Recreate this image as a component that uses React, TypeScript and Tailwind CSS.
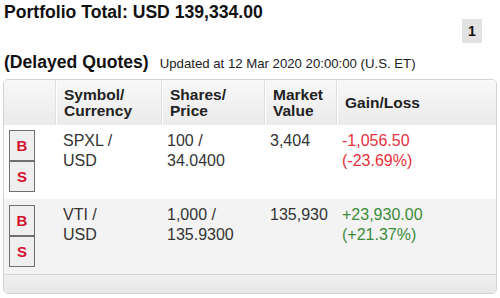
const font = { fontFamily: '"Liberation Sans", Arial, sans-serif' };

type Holding = {
  symbol: string;
  shares: string;
  price: string;
  value: string;
  gain: string;
  pct: string;
  up: boolean;
};

const holdings: Holding[] = [
  { symbol: 'SPXL', shares: '100', price: '34.0400', value: '3,404', gain: '-1,056.50', pct: '(-23.69%)', up: false },
  { symbol: 'VTI', shares: '1,000', price: '135.9300', value: '135,930', gain: '+23,930.00', pct: '(+21.37%)', up: true },
];

const cols = 'grid grid-cols-[51px_106px_103px_72px_1fr]';

const TradeButton = ({ label }: { label: string }) => (
  <button className="w-[26px] h-[31px] flex items-center justify-center bg-[#efefef] border-[1.5px] border-[#6f6f6f] text-[#d5102a] font-bold text-[15px] leading-none">
    {label}
  </button>
);

const HeaderCell = ({ children, first }: { children?: React.ReactNode; first?: boolean }) => (
  <div
    className={`flex items-center pl-[8px] text-[15.5px] leading-[16px] font-bold text-[#222] ${
      first ? '' : 'border-l border-[#e0e0e0] shadow-[inset_1px_0_0_#ffffff]'
    }`}
  >
    {children}
  </div>
);

export default function App() {
  return (
    <div className="w-[500px] h-[298px] bg-white text-[#333] overflow-hidden" style={font}>
      <div className="px-[4px]">
        <h1 className="pt-[2px] text-[17.6px] leading-[20px] font-bold text-[#111]">
          Portfolio Total: USD 139,334.00
        </h1>

        <div className="mt-[-3px] flex justify-end pr-[14px]">
          <span className="w-[20px] h-[24px] flex items-center justify-center bg-[#e2e2e2] text-[14px] font-bold text-[#111]">
            1
          </span>
        </div>

        <div className="mt-[9px] flex items-baseline leading-[20px]">
          <span className="text-[17.6px] font-bold text-[#111]">(Delayed Quotes)</span>
          <span className="ml-[11px] text-[13.2px] text-[#222]">
            Updated at 12 Mar 2020 20:00:00 (U.S. ET)
          </span>
        </div>
      </div>

      <div className="mt-[5px] ml-[3px] w-[494px] border border-[#d2d2d2] rounded-[5px] overflow-hidden">
        <div className={`${cols} h-[45px] bg-gradient-to-b from-[#f8f8f8] to-[#ebebeb]`}>
          <HeaderCell first />
          <HeaderCell>
            Symbol/
            <br />
            Currency
          </HeaderCell>
          <HeaderCell>
            Shares/
            <br />
            Price
          </HeaderCell>
          <HeaderCell>
            Market
            <br />
            Value
          </HeaderCell>
          <HeaderCell>Gain/Loss</HeaderCell>
        </div>

        {holdings.map((h, i) => (
          <div
            key={h.symbol}
            className={`${cols} ${i === 0 ? 'h-[74px] bg-white' : 'h-[75px] bg-[#f3f3f3]'} text-[16px] leading-[20px]`}
          >
            <div className={`pl-[5px] ${i === 0 ? 'pt-[5px]' : 'pt-[6px]'} flex flex-col`}>
              <TradeButton label="B" />
              <TradeButton label="S" />
            </div>
            <div className="pl-[8px] pt-[6px]">
              {h.symbol} /
              <br />
              USD
            </div>
            <div className="pl-[6px] pt-[6px]">
              {h.shares} /
              <br />
              {h.price}
            </div>
            <div className="pl-[6px] pt-[6px]">{h.value}</div>
            <div className={`pl-[6px] pt-[6px] ${h.up ? 'text-[#3b8b3b]' : 'text-[#e8303c]'}`}>
              {h.gain}
              <br />
              {h.pct}
            </div>
          </div>
        ))}

        <div className="h-[19px] border-t border-[#d6d6d6] bg-gradient-to-b from-[#f0f0f0] to-[#e8e8e8]" />
      </div>
    </div>
  );
}
